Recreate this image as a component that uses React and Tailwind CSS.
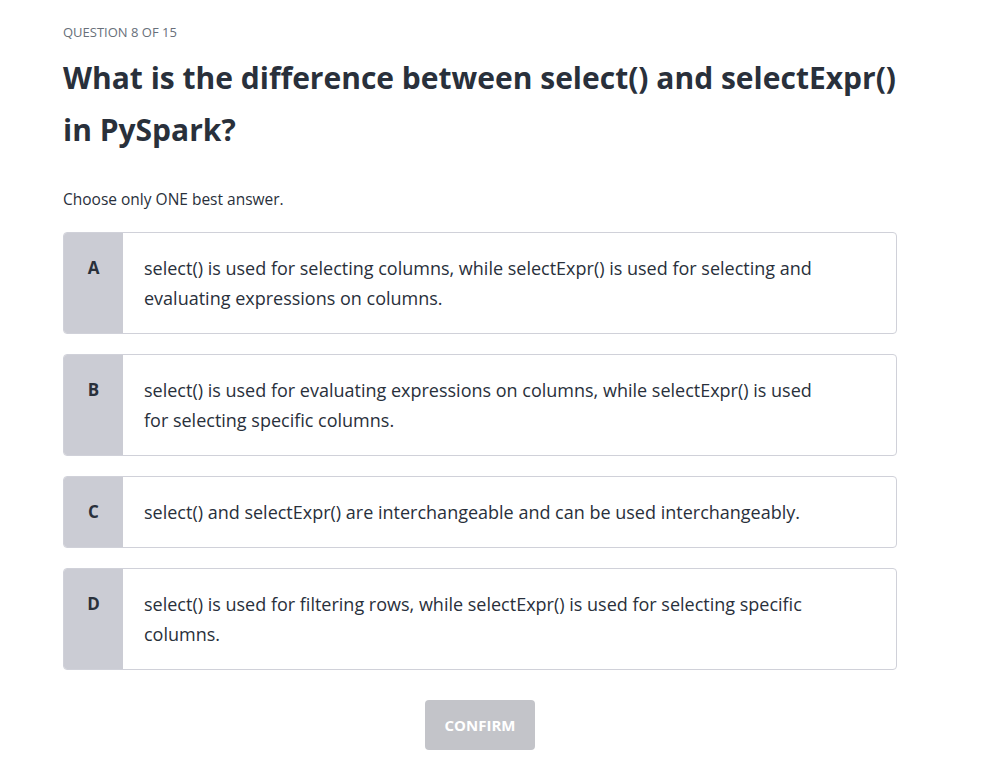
const options = [
  {
    letter: "A",
    text: "select() is used for selecting columns, while selectExpr() is used for selecting and evaluating expressions on columns.",
  },
  {
    letter: "B",
    text: "select() is used for evaluating expressions on columns, while selectExpr() is used for selecting specific columns.",
  },
  {
    letter: "C",
    text: "select() and selectExpr() are interchangeable and can be used interchangeably.",
  },
  {
    letter: "D",
    text: "select() is used for filtering rows, while selectExpr() is used for selecting specific columns.",
  },
];

export default function App() {
  return (
    <div
      className="min-h-screen bg-white text-[#29303b]"
      style={{ fontFamily: "'Open Sans', 'Noto Sans', sans-serif" }}
    >
      <div className="w-[834px] ml-[63px] pt-[22px]">
        {/* Header */}
        <div className="text-[13px] leading-[20px] text-[#686f7a] uppercase">
          Question 8 of 15
        </div>
        <h1 className="mt-[10px] text-[30px] leading-[52px] font-bold">
          What is the difference between select() and selectExpr() in PySpark?
        </h1>
        <p className="mt-[31px] text-[15.5px] leading-[24px]">
          Choose only ONE best answer.
        </p>

        {/* Options */}
        <div className="mt-[21px] flex flex-col gap-5">
          {options.map((opt) => (
            <div
              key={opt.letter}
              className="flex border border-[#d0d1d9] rounded-[4px] overflow-hidden bg-white cursor-pointer"
            >
              <div className="w-[59px] shrink-0 bg-[#cbccd4] pt-5 text-center text-[17px] leading-[30px] font-bold">
                {opt.letter}
              </div>
              <div className="py-5 pl-[21px] pr-[76px] text-[18px] leading-[30px]">
                {opt.text}
              </div>
            </div>
          ))}
        </div>

        {/* Confirm */}
        <div className="mt-[30px] flex justify-center">
          <button
            disabled
            className="w-[110px] h-[50px] rounded-[4px] bg-[#c3c4c9] text-white text-[15px] font-bold uppercase"
          >
            Confirm
          </button>
        </div>
      </div>
    </div>
  );
}
